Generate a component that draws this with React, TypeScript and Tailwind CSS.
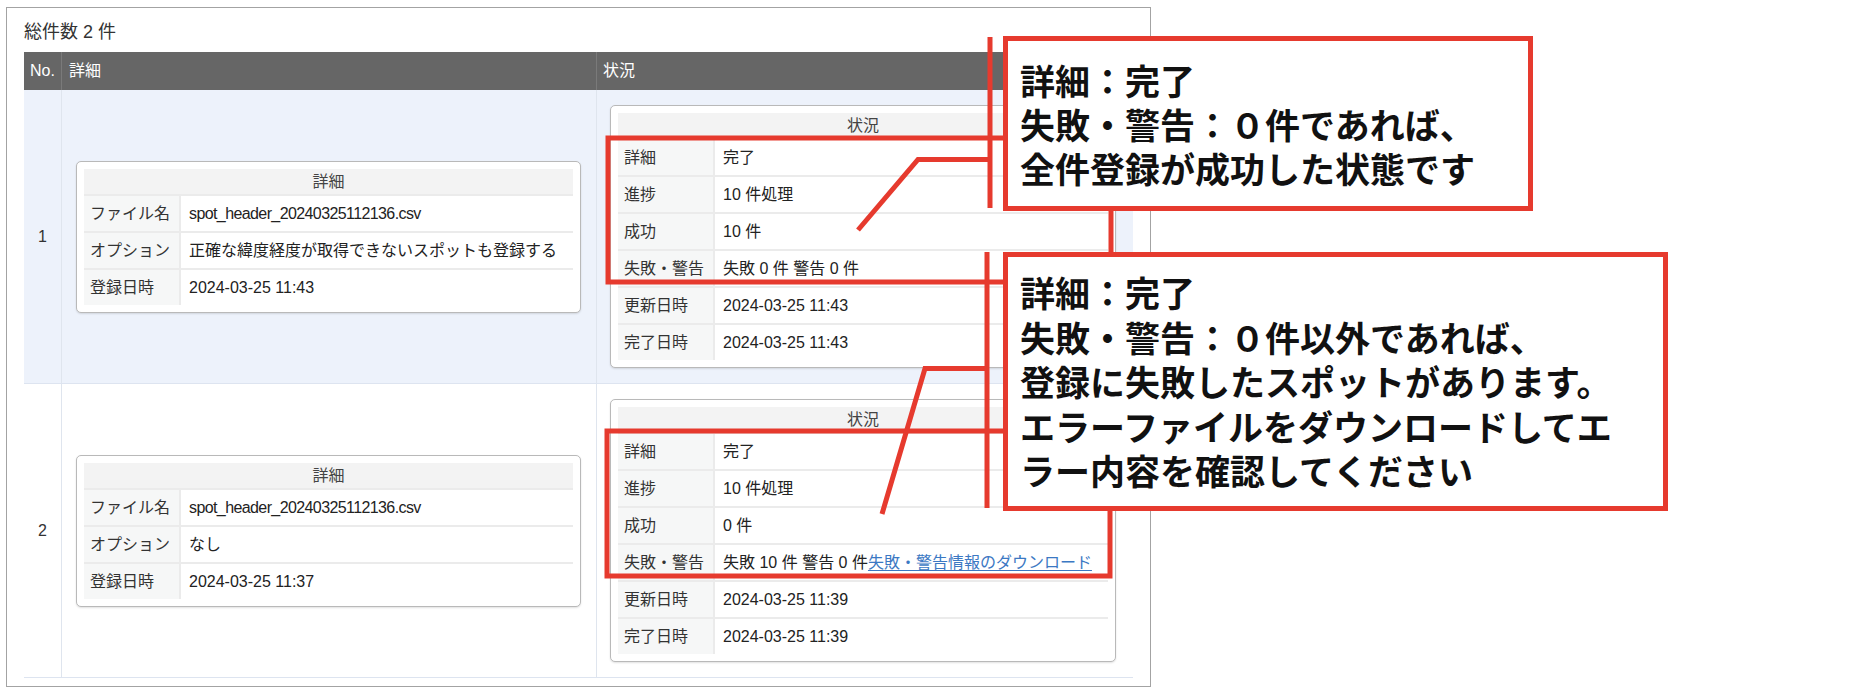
import React from "react";

interface Row {
  label: string;
  value: React.ReactNode;
}

interface Job {
  no: number;
  detail: Row[];
  status: Row[];
  highlight: boolean;
}

const fileName = (
  <span className="tracking-[-0.6px]">spot_header_20240325112136.csv</span>
);

const jobs: Job[] = [
  {
    no: 1,
    highlight: true,
    detail: [
      { label: "ファイル名", value: fileName },
      { label: "オプション", value: "正確な緯度経度が取得できないスポットも登録する" },
      { label: "登録日時", value: "2024-03-25 11:43" },
    ],
    status: [
      { label: "詳細", value: "完了" },
      { label: "進捗", value: "10 件処理" },
      { label: "成功", value: "10 件" },
      { label: "失敗・警告", value: "失敗 0 件 警告 0 件" },
      { label: "更新日時", value: "2024-03-25 11:43" },
      { label: "完了日時", value: "2024-03-25 11:43" },
    ],
  },
  {
    no: 2,
    highlight: false,
    detail: [
      { label: "ファイル名", value: fileName },
      { label: "オプション", value: "なし" },
      { label: "登録日時", value: "2024-03-25 11:37" },
    ],
    status: [
      { label: "詳細", value: "完了" },
      { label: "進捗", value: "10 件処理" },
      { label: "成功", value: "0 件" },
      {
        label: "失敗・警告",
        value: (
          <>
            失敗 10 件 警告 0 件
            <a href="#" className="text-[#3b78c3] underline underline-offset-2">
              失敗・警告情報のダウンロード
            </a>
          </>
        ),
      },
      { label: "更新日時", value: "2024-03-25 11:39" },
      { label: "完了日時", value: "2024-03-25 11:39" },
    ],
  },
];

// small bordered card with a title row and label/value rows
const InfoCard = ({ title, rows }: { title: string; rows: Row[] }) => (
  <div className="w-full rounded-[5px] border border-[#b9b9b9] bg-white p-[7px] shadow-[0_1px_2px_rgba(0,0,0,0.12)]">
    <div className="grid grid-cols-[95px_1fr] gap-[2px] bg-[#ebebeb]">
      <div className="col-span-2 h-[25px] bg-[#f3f3f3] text-center leading-[25px] text-[#444]">
        {title}
      </div>
      {rows.map((row) => (
        <React.Fragment key={row.label}>
          <div className="h-[35px] whitespace-nowrap bg-[#f6f7f7] pl-[6px] leading-[35px] text-[#333]">
            {row.label}
          </div>
          <div className="h-[35px] whitespace-nowrap bg-white pl-[8px] leading-[35px] text-[#222]">
            {row.value}
          </div>
        </React.Fragment>
      ))}
    </div>
  </div>
);

const App = () => {
  return (
    <div className="relative h-[698px] w-[1862px] overflow-hidden bg-white font-['Liberation_Sans','Noto_Sans_CJK_JP',sans-serif] text-[16px]">
      {/* list frame */}
      <div className="ml-[6px] mt-[7px] w-[1145px] border border-[#a3a3a3] px-[17px] pb-[8px]">
        <div className="pt-[12px] mb-[8px] text-[18px] leading-[24px] text-[#333]">総件数 2 件</div>

        <div className="grid h-[38px] grid-cols-[38px_535px_536px] bg-[#666] text-white">
          <div className="flex items-center justify-center border-r border-[#7a7a7a]">No.</div>
          <div className="flex items-center border-r border-[#7a7a7a] pl-[7px]">詳細</div>
          <div className="flex items-center pl-[6px]">状況</div>
        </div>

        {jobs.map((job) => (
          <div
            key={job.no}
            className={`grid grid-cols-[38px_535px_536px] border-b border-[#dde4f0] ${
              job.highlight ? "bg-[#edf2fb]" : "bg-white"
            }`}
          >
            <div className="flex items-center justify-center border-r border-[#dfe5ee] text-[#333]">
              {job.no}
            </div>
            <div className="flex items-center border-r border-[#dfe5ee] px-[14px] pr-[15px] py-[15px]">
              <InfoCard title="詳細" rows={job.detail} />
            </div>
            <div className="flex items-center pl-[13px] pr-[17px] py-[15px]">
              <InfoCard title="状況" rows={job.status} />
            </div>
          </div>
        ))}
      </div>

      {/* annotation lines */}
      <svg
        className="pointer-events-none absolute left-0 top-0"
        width="1862"
        height="698"
        fill="none"
        stroke="#e63a2e"
        strokeWidth="5"
      >
        <path d="M990 37 V208" />
        <path d="M1005 138 H608 V282 H1005" />
        <path d="M987 252 V508" />
        <path d="M1005 431 H607 V576 H1110 V511" />
        <path d="M1111 206 V254" />
        <path d="M858 230 L918 159.5 H990" />
        <path d="M882 514 L925 368.5 H987" />
      </svg>

      {/* callouts */}
      <div className="absolute left-[1003px] top-[36px] flex h-[175px] w-[530px] items-center border-[5px] border-[#e63a2e] bg-white pl-[12px] font-['Noto_Sans_CJK_JP',sans-serif] text-[35px] font-bold leading-[44px] text-[#111]">
        <div>
          <div>詳細：完了</div>
          <div>失敗・警告：０件であれば、</div>
          <div>全件登録が成功した状態です</div>
        </div>
      </div>

      <div className="absolute left-[1003px] top-[252px] flex h-[259px] w-[665px] items-center border-[5px] border-[#e63a2e] bg-white pl-[12px] font-['Noto_Sans_CJK_JP',sans-serif] text-[35px] font-bold leading-[44.5px] text-[#111]">
        <div>
          <div>詳細：完了</div>
          <div>失敗・警告：０件以外であれば、</div>
          <div>登録に失敗したスポットがあります。</div>
          <div>エラーファイルをダウンロードしてエ</div>
          <div>ラー内容を確認してください</div>
        </div>
      </div>
    </div>
  );
};

export default App;
